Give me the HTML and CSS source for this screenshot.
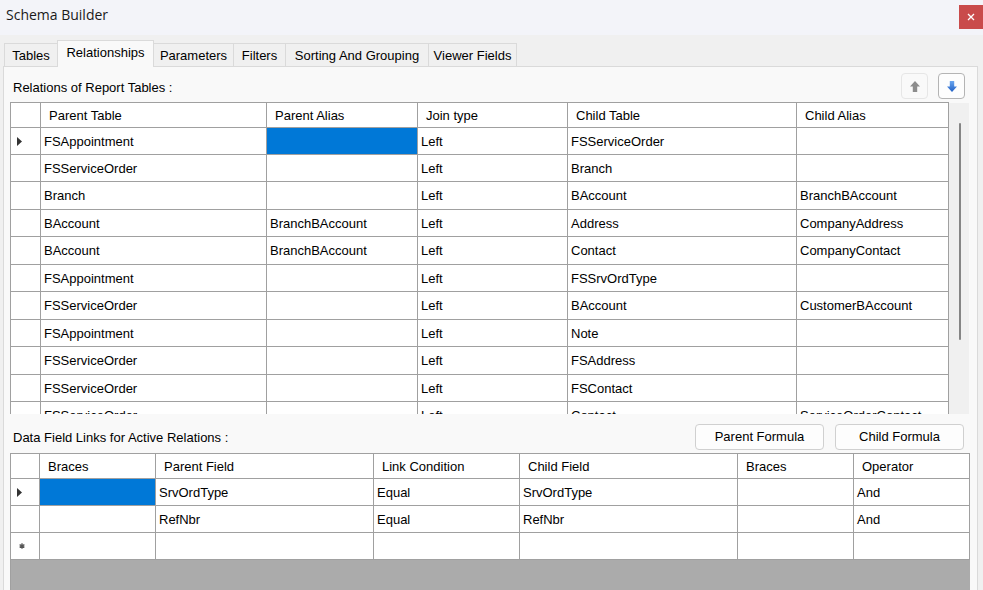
FILE: index.html
```html
<!DOCTYPE html>
<html>
<head>
<meta charset="utf-8">
<title>Schema Builder</title>
<link rel="stylesheet" href="styles.css">
</head>
<body>
<div class="titlebar">
  <div class="title">Schema Builder</div>
  <div class="close"><svg width="8" height="8" viewBox="0 0 8 8"><path d="M1 1L7 7M7 1L1 7" stroke="#fff" stroke-width="1.3"/></svg></div>
</div>
<div class="tabstrip">
  <div class="tab w1">Tables</div>
  <div class="tab w2 active">Relationships</div>
  <div class="tab w3">Parameters</div>
  <div class="tab w4">Filters</div>
  <div class="tab w5">Sorting And Grouping</div>
  <div class="tab w6 last">Viewer Fields</div>
</div>
<div class="panel">
  <div class="head1">
    <div class="label l1">Relations of Report Tables :</div>
    <div class="arrows">
      <div class="abtn disabled"><svg width="12" height="13" viewBox="0 0 12 13"><path d="M6 1L11 6.5H8.2V12H3.8V6.5H1Z" fill="#8c8c8c"/></svg></div>
      <div class="abtn"><svg width="12" height="13" viewBox="0 0 12 13"><defs><linearGradient id="bg" x1="0" y1="0" x2="0" y2="1"><stop offset="0" stop-color="#6aa6f0"/><stop offset="1" stop-color="#1f5fc4"/></linearGradient></defs><path d="M3.8 1H8.2V6.5H11L6 12L1 6.5H3.8Z" fill="url(#bg)"/></svg></div>
    </div>
  </div>
  <div class="gridwrap1">
    <div class="grid g1">
      <div class="h rh"></div><div class="h">Parent Table</div><div class="h">Parent Alias</div><div class="h">Join type</div><div class="h">Child Table</div><div class="h">Child Alias</div>

      <div class="c rh"><svg class="cur" width="5" height="9" viewBox="0 0 5 9"><path d="M0 0L5 4.5L0 9Z" fill="#333"/></svg></div><div class="c">FSAppointment</div><div class="c sel"></div><div class="c">Left</div><div class="c">FSServiceOrder</div><div class="c"></div>
      <div class="c rh"></div><div class="c">FSServiceOrder</div><div class="c"></div><div class="c">Left</div><div class="c">Branch</div><div class="c"></div>
      <div class="c rh"></div><div class="c">Branch</div><div class="c"></div><div class="c">Left</div><div class="c">BAccount</div><div class="c">BranchBAccount</div>
      <div class="c rh"></div><div class="c">BAccount</div><div class="c">BranchBAccount</div><div class="c">Left</div><div class="c">Address</div><div class="c">CompanyAddress</div>
      <div class="c rh"></div><div class="c">BAccount</div><div class="c">BranchBAccount</div><div class="c">Left</div><div class="c">Contact</div><div class="c">CompanyContact</div>
      <div class="c rh"></div><div class="c">FSAppointment</div><div class="c"></div><div class="c">Left</div><div class="c">FSSrvOrdType</div><div class="c"></div>
      <div class="c rh"></div><div class="c">FSServiceOrder</div><div class="c"></div><div class="c">Left</div><div class="c">BAccount</div><div class="c">CustomerBAccount</div>
      <div class="c rh"></div><div class="c">FSAppointment</div><div class="c"></div><div class="c">Left</div><div class="c">Note</div><div class="c"></div>
      <div class="c rh"></div><div class="c">FSServiceOrder</div><div class="c"></div><div class="c">Left</div><div class="c">FSAddress</div><div class="c"></div>
      <div class="c rh"></div><div class="c">FSServiceOrder</div><div class="c"></div><div class="c">Left</div><div class="c">FSContact</div><div class="c"></div>
      <div class="c rh"></div><div class="c">FSServiceOrder</div><div class="c"></div><div class="c">Left</div><div class="c">Contact</div><div class="c">ServiceOrderContact</div>
    </div>
    <div class="vscroll"><div class="thumb"></div></div>
  </div>
  <div class="head2">
    <div class="label l2">Data Field Links for Active Relations :</div>
    <div class="fbtns">
      <div class="btn">Parent Formula</div>
      <div class="btn">Child Formula</div>
    </div>
  </div>
  <div class="grid g2">
    <div class="h rh"></div><div class="h">Braces</div><div class="h">Parent Field</div><div class="h">Link Condition</div><div class="h">Child Field</div><div class="h">Braces</div><div class="h">Operator</div>

    <div class="c rh"><svg class="cur" width="5" height="9" viewBox="0 0 5 9"><path d="M0 0L5 4.5L0 9Z" fill="#333"/></svg></div><div class="c sel"></div><div class="c">SrvOrdType</div><div class="c">Equal</div><div class="c">SrvOrdType</div><div class="c"></div><div class="c">And</div>
    <div class="c rh"></div><div class="c"></div><div class="c">RefNbr</div><div class="c">Equal</div><div class="c">RefNbr</div><div class="c"></div><div class="c">And</div>
    <div class="c rh"><svg class="star" width="6" height="6" viewBox="0 0 6 6"><path d="M3 0.2V5.8M0.6 1.6L5.4 4.4M5.4 1.6L0.6 4.4" stroke="#555" stroke-width="1.3"/></svg></div><div class="c"></div><div class="c"></div><div class="c"></div><div class="c"></div><div class="c"></div><div class="c"></div>
  </div>
</div>
</body>
</html>
```
FILE: styles.css
```css
* { box-sizing: border-box; }
html, body { margin: 0; padding: 0; }
body {
  width: 983px;
  height: 590px;
  overflow: hidden;
  background: #f0f0f0;
  font-family: "Liberation Sans", Arial, sans-serif;
  font-size: 13px;
  color: #000;
  display: flex;
  flex-direction: column;
}
.titlebar {
  flex: none;
  height: 35px;
  background: #f3f4f9;
  display: flex;
  justify-content: space-between;
  align-items: flex-start;
}
.title {
  font-family: "Open Sans", "Noto Sans", sans-serif;
  font-size: 14px;
  line-height: 20px;
  padding: 5px 0 0 6px;
  color: #1a1a1a;
}
.close {
  width: 24px;
  height: 24px;
  margin-top: 5px;
  background: #c94b4b;
  display: flex;
  align-items: center;
  justify-content: center;
}
.tabstrip {
  flex: none;
  height: 31px;
  display: flex;
  align-items: flex-end;
  padding-left: 4px;
  position: relative;
  z-index: 1;
}
.tab {
  height: 23px;
  border: 1px solid #dadada;
  border-bottom: none;
  border-right: none;
  background: #f0f0f0;
  text-align: center;
  line-height: 23px;
  white-space: nowrap;
}
.tab.last { border-right: 1px solid #dadada; }
.tab.active {
  height: 27px;
  margin-bottom: -1px;
  background: #f9f9f9;
  border-right: 1px solid #dadada;
  line-height: 23px;
}
.tab.active + .tab { border-left: none; }
.w1 { width: 53px; }
.w2 { width: 97px; }
.w3 { width: 79px; }
.w4 { width: 52px; }
.w5 { width: 143px; }
.w6 { width: 89px; }
.panel {
  flex: 1;
  min-height: 0;
  margin: 0 5px 0 3px;
  background: #f9f9f9;
  border: 1px solid #dadada;
  border-bottom: none;
  padding: 0 8px 0 6px;
  display: flex;
  flex-direction: column;
}
.head1 {
  flex: none;
  height: 35px;
  display: flex;
  align-items: flex-start;
}
.label { line-height: 16px; margin-left: 3px; white-space: nowrap; }
.l1 { margin-top: 13px; }
.arrows {
  margin-left: auto;
  margin-top: 6px;
  margin-right: 4px;
  display: flex;
  gap: 10px;
}
.abtn {
  width: 27px;
  height: 26px;
  border: 1px solid #b4b4b4;
  border-radius: 4px;
  background: #fdfdfd;
  display: flex;
  align-items: center;
  justify-content: center;
}
.abtn.disabled { border-color: #e6e6e6; background: #f9f9f9; }
.gridwrap1 {
  flex: none;
  height: 312px;
  display: flex;
  overflow: hidden;
}
.grid {
  display: grid;
  border-top: 1px solid #a0a0a0;
  border-left: 1px solid #a0a0a0;
  align-content: start;
}
.g1 {
  flex: none;
  width: 939px;
  grid-template-columns: 30px 226px 151px 150px 229px 152px;
  grid-template-rows: 25px 27px;
  grid-auto-rows: 27px 28px;
}
.h, .c {
  background: #fff;
  border-right: 1px solid #a0a0a0;
  border-bottom: 1px solid #a0a0a0;
  display: flex;
  align-items: center;
  white-space: nowrap;
  overflow: hidden;
}
.h { padding-left: 8px; }
.c { padding-left: 3px; }
.h.rh, .c.rh { padding-left: 0; }
.cur { margin-left: 6px; }
.star { margin-left: 8px; }
.sel { background: #0078d7; }
.vscroll {
  flex: none;
  width: 20px;
  background: #f0f0f0;
  position: relative;
  margin-top: 1px;
}
.thumb {
  position: absolute;
  left: 10px;
  top: 20px;
  width: 2px;
  height: 217px;
  background: #858585;
  border-radius: 1px;
}
.head2 {
  flex: none;
  height: 39px;
  display: flex;
  align-items: flex-start;
}
.l2 { margin-top: 16px; }
.fbtns {
  margin-left: auto;
  margin-top: 10px;
  margin-right: 5px;
  display: flex;
  gap: 11px;
}
.btn {
  width: 129px;
  height: 26px;
  border: 1px solid #d0d0d0;
  border-radius: 4px;
  background: #fdfdfd;
  text-align: center;
  line-height: 24px;
}
.g2 {
  flex: 1;
  width: 960px;
  background: #ababab;
  grid-template-columns: 29px 116px 218px 146px 218px 116px 116px;
  grid-template-rows: 25px;
  grid-auto-rows: 27px;
}
```
